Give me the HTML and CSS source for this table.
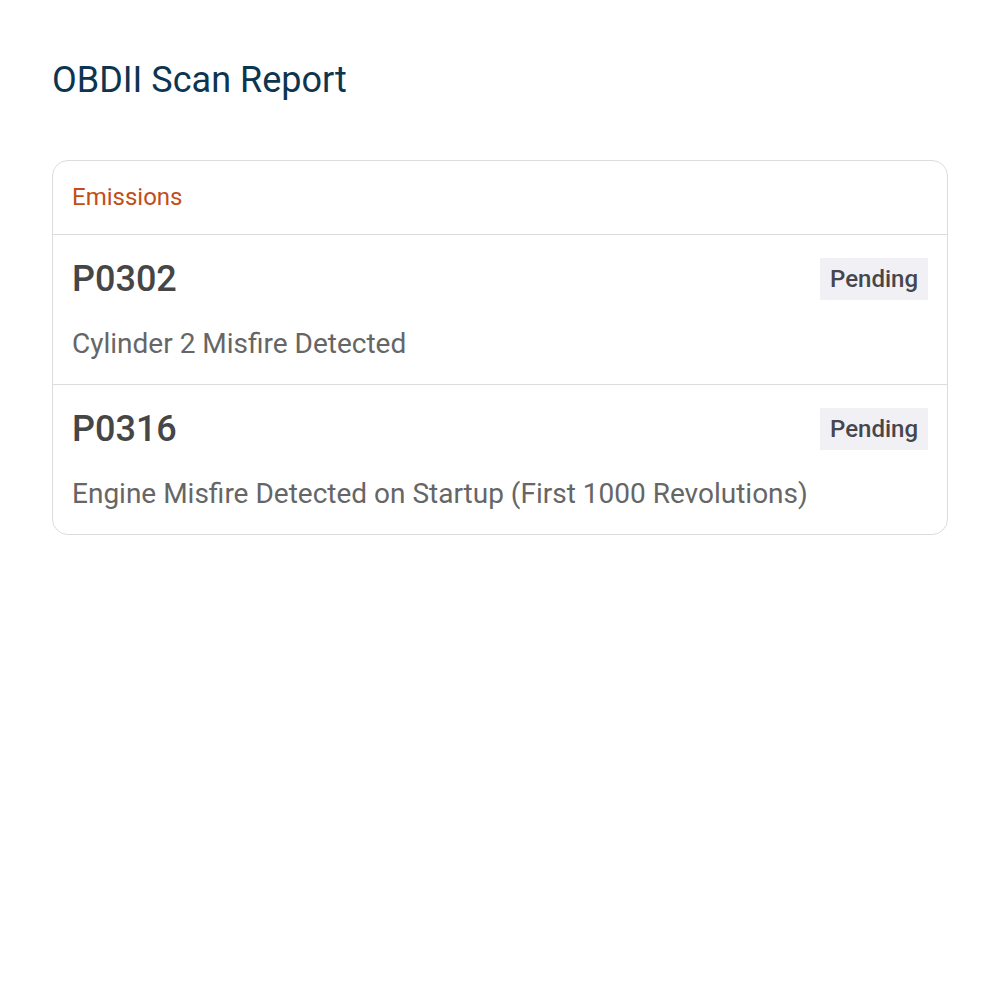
FILE: index.html
```html
<!DOCTYPE html>
<html>
<head lang="en">
    <meta charset="UTF-8">
    <title>OBDII Scan Report</title>
    <link rel="stylesheet" href="styles.css">
</head>
<body>
<div class="page">
    <h1 class="report-title">OBDII Scan Report</h1>
    <div class="report-card">
        <div class="card-header">Emissions</div>
        <div class="code-row">
            <div class="code-top">
                <span class="code-id">P0302</span>
                <span class="code-status">Pending</span>
            </div>
            <div class="code-desc">Cylinder 2 Misfire Detected</div>
        </div>
        <div class="code-row">
            <div class="code-top">
                <span class="code-id">P0316</span>
                <span class="code-status">Pending</span>
            </div>
            <div class="code-desc">Engine Misfire Detected on Startup (First 1000 Revolutions)</div>
        </div>
    </div>
</div>
</body>
</html>
```

FILE: styles.css
```css
body {
    margin: 0px;
    background: #ffffff;
    font-family: Roboto, "Noto Sans", sans-serif;
}
.page {
    padding: 59px 52px 0px 52px;
}
.report-title {
    margin: 0px;
    font-size: 36px;
    font-weight: 400;
    color: #0d3550;
    line-height: 42px;
}
.report-card {
    margin-top: 59px;
    border: 1px solid #dcdcdc;
    border-radius: 16px;
}
.card-header {
    padding: 0px 19px;
    height: 73px;
    line-height: 73px;
    font-size: 24px;
    color: #c24e16;
    border-bottom: 1px solid #dcdcdc;
}
.code-row {
    padding: 23px 19px 0px 19px;
    height: 126px;
    border-bottom: 1px solid #dcdcdc;
}
.code-row:last-child {
    border-bottom: none;
}
.code-top {
    display: flex;
    justify-content: space-between;
    align-items: center;
}
.code-id {
    font-size: 36px;
    font-weight: 500;
    color: #464646;
}
.code-status {
    background: #f1f1f5;
    color: #46464c;
    font-size: 24px;
    font-weight: 500;
    padding: 0px 10px;
    height: 42px;
    line-height: 42px;
}
.code-desc {
    margin-top: 27px;
    font-size: 28px;
    line-height: 33px;
    color: #666666;
}
```
